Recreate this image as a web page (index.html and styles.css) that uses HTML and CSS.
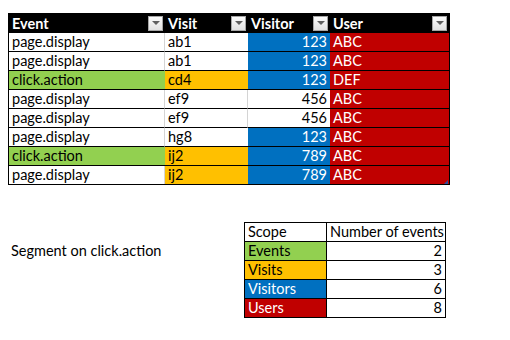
FILE: index.html
```html
<!DOCTYPE html>
<html>
<head>
<meta charset="utf-8">
<link rel="stylesheet" href="styles.css">
</head>
<body>
<div class="page">
  <div class="data-wrap">
    <table class="data">
      <colgroup>
        <col class="c-event"><col class="c-visit"><col class="c-visitor"><col class="c-user">
      </colgroup>
      <thead>
        <tr>
          <th><div class="hcell"><span>Event</span><span class="dd"></span></div></th>
          <th><div class="hcell"><span>Visit</span><span class="dd"></span></div></th>
          <th><div class="hcell"><span>Visitor</span><span class="dd"></span></div></th>
          <th><div class="hcell"><span>User</span><span class="dd"></span></div></th>
        </tr>
      </thead>
      <tbody>
        <tr><td class="g">page.display</td><td>ab1</td><td class="num blue">123</td><td class="red">ABC</td></tr>
        <tr><td class="g">page.display</td><td>ab1</td><td class="num blue">123</td><td class="red">ABC</td></tr>
        <tr><td class="green">click.action</td><td class="orange">cd4</td><td class="num blue">123</td><td class="red">DEF</td></tr>
        <tr><td class="g">page.display</td><td class="g">ef9</td><td class="num">456</td><td class="red">ABC</td></tr>
        <tr><td class="g">page.display</td><td class="g">ef9</td><td class="num">456</td><td class="red">ABC</td></tr>
        <tr><td class="g">page.display</td><td>hg8</td><td class="num blue">123</td><td class="red">ABC</td></tr>
        <tr><td class="green">click.action</td><td class="orange">ij2</td><td class="num blue">789</td><td class="red">ABC</td></tr>
        <tr><td class="g">page.display</td><td class="orange">ij2</td><td class="num blue">789</td><td class="red">ABC</td></tr>
      </tbody>
    </table>
    <span class="handle"></span>
  </div>

  <div class="summary">
    <div class="label">Segment on click.action</div>
    <table class="scope">
      <colgroup><col class="c-scope"><col class="c-count"></colgroup>
      <tr><td>Scope</td><td>Number of events</td></tr>
      <tr><td class="green">Events</td><td class="num">2</td></tr>
      <tr><td class="orange">Visits</td><td class="num">3</td></tr>
      <tr><td class="blue">Visitors</td><td class="num">6</td></tr>
      <tr><td class="red">Users</td><td class="num">8</td></tr>
    </table>
  </div>
</div>
</body>
</html>
```

FILE: styles.css
```css
html, body {
  margin: 0;
  padding: 0;
  background: #fff;
}

body {
  font-family: "Lato", "Liberation Sans", sans-serif;
  font-size: 14.5px;
  color: #000;
}

.page {
  padding: 13px 0 0 8px;
  display: flex;
  flex-direction: column;
}

.data-wrap {
  position: relative;
  width: 441px;
}

table {
  border-spacing: 0;
  table-layout: fixed;
}

.data {
  width: 441px;
  border-left: 1px solid #000;
  border-right: 1px solid #000;
  border-bottom: 1px solid #000;
}

.c-event { width: 156px; }
.c-visit { width: 83px; }
.c-visitor { width: 82px; }
.c-user { width: 119px; }

.data th {
  background: #000;
  color: #fff;
  font-weight: bold;
  height: 20px;
  padding: 0;
  text-align: left;
}

.hcell {
  display: flex;
  align-items: center;
  height: 20px;
  padding: 0 2px 0 3px;
}

.dd {
  margin-left: auto;
  width: 15px;
  height: 15px;
  box-sizing: border-box;
  border: 1px solid #a6a6a6;
  background: linear-gradient(#fbfbfb, #e1e1e1);
  display: flex;
  align-items: center;
  justify-content: center;
}

.dd::after {
  content: "";
  width: 0;
  height: 0;
  border-left: 4px solid transparent;
  border-right: 4px solid transparent;
  border-top: 4px solid #5f5f5f;
}

.data td {
  height: 18px;
  padding: 0 3px;
  line-height: 18px;
  border-bottom: 1px solid #000;
  white-space: nowrap;
  overflow: hidden;
}

.data tbody tr:last-child td {
  border-bottom: none;
}

.data td.g {
  border-right: 1px solid #d4d4d4;
  padding-right: 2px;
}

.num {
  text-align: right;
}

.green { background: #92d050; }
.orange { background: #ffc000; }
.blue { background: #0070c0; color: #fff; }
.red { background: #c00000; color: #fff; }

.handle {
  position: absolute;
  right: 1px;
  bottom: 1px;
  width: 0;
  height: 0;
  border-left: 4px solid transparent;
  border-bottom: 4px solid #2f4f9f;
}

.summary {
  display: flex;
  align-items: flex-start;
  margin-top: 37px;
}

.label {
  width: 236px;
  padding: 19px 0 0 3px;
  line-height: 19px;
  box-sizing: border-box;
}

.scope {
  width: 202px;
  border-collapse: collapse;
}

.c-scope { width: 82px; }
.c-count { width: 119px; }

.scope td {
  border: 1px solid #000;
  height: 18px;
  padding: 0 3px;
  line-height: 18px;
  white-space: nowrap;
}
```
